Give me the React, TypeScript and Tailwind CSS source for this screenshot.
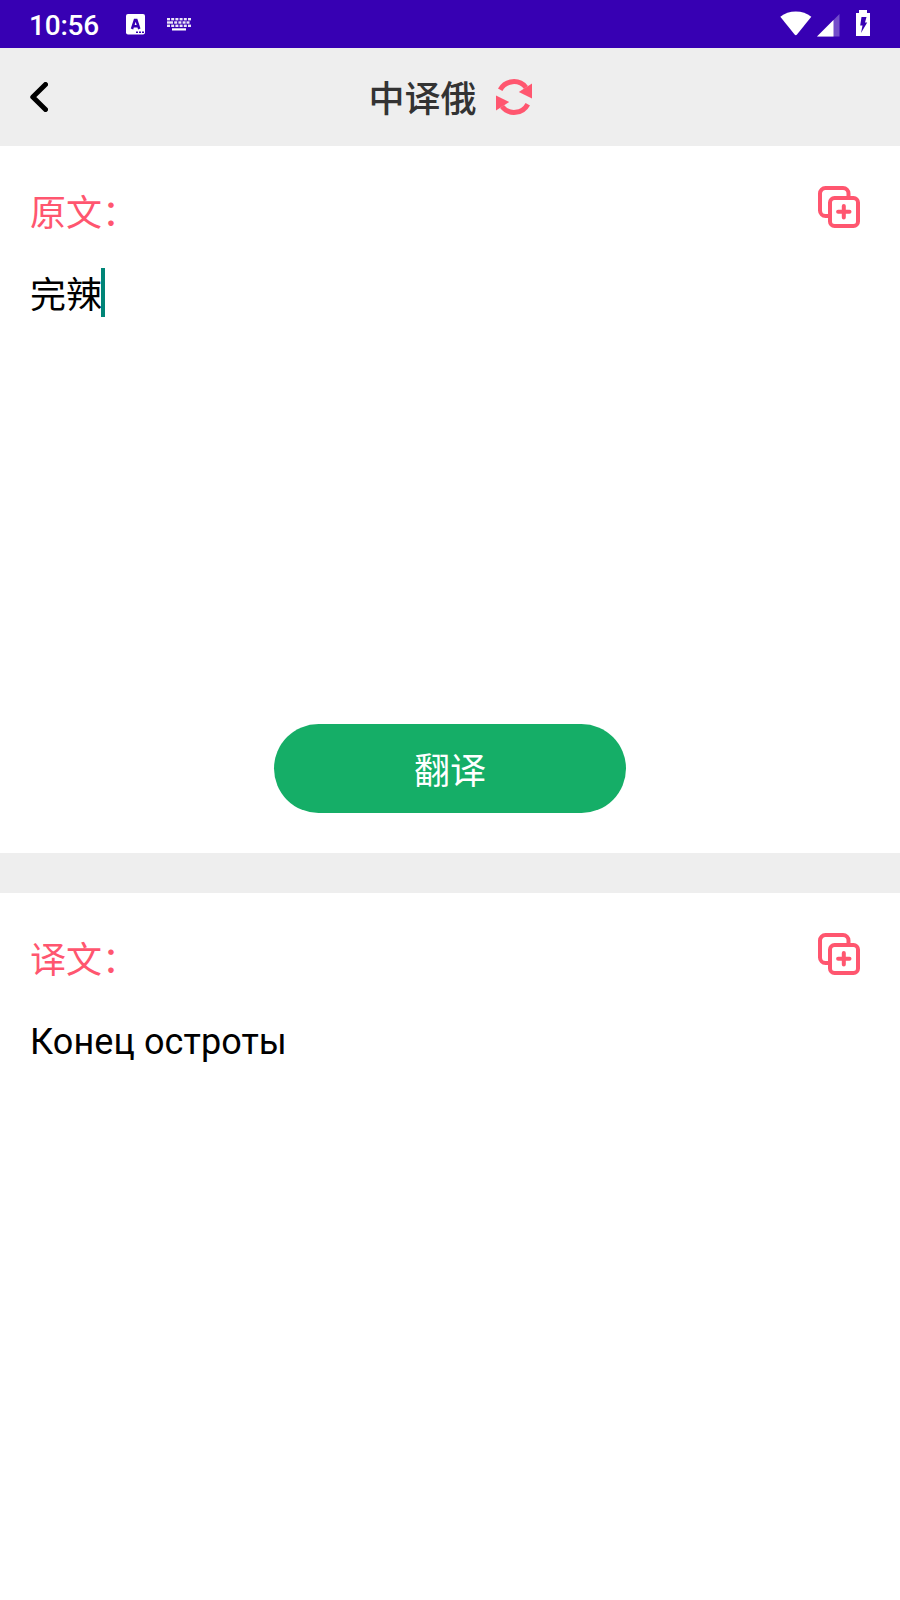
/**
 * Translation screen - source text on top, translated text below.
 */

import type { ReactNode } from "react";

interface TextPanelProps {
  label: string;
  children: ReactNode;
}

function KeyboardIcon() {
  const rows = [
    { y: 0, xs: [0, 4.2, 8.4, 12.6, 16.8, 21] },
    { y: 3.3, xs: [0, 3, 7.2, 11.4, 15.6, 19.5] },
    { y: 6.6, xs: [0, 4.2, 8.4, 12.6, 16.8, 21] },
  ];

  return (
    <svg width="24" height="13" viewBox="0 0 24 13" fill="#fff" className="ml-[22px]">
      {rows.map((row) =>
        row.xs.map((x) => (
          <rect key={`${row.y}-${x}`} x={x} y={row.y} width="3" height="2.4" opacity="0.9" />
        ))
      )}
      <rect x="5" y="10.3" width="14" height="2.2" />
    </svg>
  );
}

function StatusBar() {
  return (
    <div className="flex h-12 items-center bg-[#3700b3] text-white">
      <div className="ml-[29px] w-[72px] pt-1 text-[28px] leading-8 font-medium tracking-[-0.2px]">10:56</div>

      {/* Input method badge */}
      <svg width="19" height="21" viewBox="0 0 19 21" className="ml-[25px]">
        <rect width="19" height="20.5" rx="2" fill="#fff" />
        <path d="M6 15 L8.9 6 H10.4 L13.3 15 M7.2 12.2 H12" fill="none" stroke="#3700b3" strokeWidth="2.5" />
        <path d="M10 18.2h2M13 18.2h2M16 18.2h2" stroke="#3700b3" strokeWidth="1.6" />
      </svg>
      <KeyboardIcon />

      <div className="mr-[31px] ml-auto flex items-center">
        <svg width="32" height="25" viewBox="0 0 32 25" fill="#fff" className="mb-px">
          <path d="M.3 5.8C4.6 2.3 10 .5 15.8 .5S27 2.3 31.3 5.8L17 23.5q-1.2 1.3-2.4 0Z" />
        </svg>
        <svg width="23" height="23" viewBox="0 0 23 23" fill="#fff" className="mt-0.5 ml-[5px]">
          <path d="M22.5 0v22.5H0Z" opacity="0.3" />
          <path d="M16.5 6v16.5H0Z" />
        </svg>
        <svg width="14" height="26" viewBox="0 0 14 26" className="-mr-px mb-0.5 ml-4">
          <path d="M3 0h8v3h3v23H0V3h3Z" fill="#fff" />
          <path d="M5.5 7h5l-1.5 5.5h2.2L5 23 6.5 15.5H4.2Z" fill="#3700b3" />
        </svg>
      </div>
    </div>
  );
}

function SwapIcon() {
  return (
    <svg width="36" height="36" viewBox="0 0 36 36">
      <path d="M4.2 10.8A15.5 15.5 0 0 1 30 8.5" fill="none" stroke="#ff566f" strokeWidth="5" />
      <path d="M36 4.4V19.6L22.8 13Z" fill="#ff566f" />
      <path d="M31.8 25.2A15.5 15.5 0 0 1 6 27.5" fill="none" stroke="#ff566f" strokeWidth="5" />
      <path d="M0 31.6V16.4L13.2 23Z" fill="#ff566f" />
    </svg>
  );
}

function CopyIcon() {
  return (
    <svg
      width="42"
      height="42"
      viewBox="0 0 42 42"
      fill="none"
      stroke="#ff566f"
      strokeWidth="4"
      strokeLinecap="round"
    >
      <rect x="12" y="12" width="28" height="28" rx="4.5" />
      <path d="M11 30H7.5A5.5 5.5 0 0 1 2 24.5V7.5A5.5 5.5 0 0 1 7.5 2H25a5.5 5.5 0 0 1 5.5 5.5V11" />
      <path d="M25.8 20v11.4M20.1 25.7h11.4" />
    </svg>
  );
}

function TextPanel({ label, children }: TextPanelProps) {
  return (
    <>
      <div className="flex items-start justify-between pt-10 pr-10 pl-[30px]">
        <div className="text-[36px] leading-[56px] text-[#ff566f]">{label}</div>
        <CopyIcon />
      </div>
      <div className="mt-[26px] flex items-center pl-[30px] text-[36px] leading-[54px] text-black">
        {children}
      </div>
    </>
  );
}

export default function App() {
  return (
    <div
      lang="zh-CN"
      className="flex h-[1600px] w-[900px] flex-col overflow-hidden bg-white font-['Roboto','Noto_Sans_CJK_SC',sans-serif]"
    >
      <StatusBar />

      <header className="grid h-[98px] grid-cols-[1fr_auto_1fr] items-center bg-[#eee]">
        <svg width="18" height="30" viewBox="0 0 18 30" className="ml-[30px]">
          <path
            d="M15.5 2.5L2.8 15L15.5 27.5"
            fill="none"
            stroke="#000"
            strokeWidth="5"
            strokeLinecap="round"
            strokeLinejoin="round"
          />
        </svg>
        <div className="flex items-center gap-[19px]">
          <h1 className="pt-1.5 text-[36px] leading-[50px] font-medium text-[#333]">中译俄</h1>
          <SwapIcon />
        </div>
      </header>

      <section className="flex h-[707px] flex-col">
        <TextPanel label="原文：">
          <span className="pt-px">完辣</span>
          <span className="mb-1.5 -ml-px h-[49px] w-1 bg-[#008577]" />
        </TextPanel>
        <button className="mx-auto mt-auto mb-10 h-[89px] w-[352px] rounded-full bg-[#15ae67] pt-1.5 text-[36px] text-white">
          翻译
        </button>
      </section>

      <div className="h-10 bg-[#eee]" />

      <section>
        <TextPanel label="译文：">
          <span className="tracking-[0.1px]">Конец остроты</span>
        </TextPanel>
      </section>
    </div>
  );
}
